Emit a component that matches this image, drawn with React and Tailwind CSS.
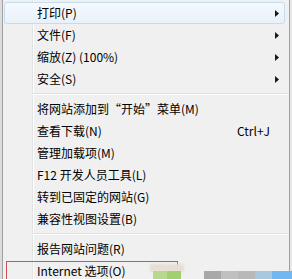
import React from "react";

const Arrow = () => (
  <svg width="4" height="7" viewBox="0 0 4 7" className="ml-auto mr-[5px]">
    <path d="M0 0 L4 3.5 L0 7 Z" fill="#1a1a1a" />
  </svg>
);

const Item = ({ label, arrow, shortcut, active }) => (
  <div
    className={
      "h-[22px] ml-px mr-[4px] flex items-center pl-[32px] rounded-[3px] border " +
      (active
        ? "border-[#c5dcf0] bg-gradient-to-b from-[#f5f9fd] to-[#e8f1fa]"
        : "border-transparent")
    }
  >
    <span className="leading-none whitespace-nowrap">{label}</span>
    {arrow && <Arrow />}
    {shortcut && <span className="ml-auto mr-[14px] leading-none">{shortcut}</span>}
  </div>
);

const Separator = () => (
  <div className="h-[8px] flex flex-col justify-center pl-[29px] pr-[1px]">
    <div className="h-px bg-[#e0e0e0]"></div>
    <div className="h-px bg-white"></div>
  </div>
);

export default function App() {
  return (
    <div className="relative w-[292px] h-[279px] overflow-hidden bg-[#f0f0f0] flex font-['Noto_Sans_CJK_SC',sans-serif] text-[12px] text-black">
      {/* left frame */}
      <div className="w-[2px] bg-[#dcdcdc]"></div>
      <div className="w-px bg-[#a0a0a0]"></div>

      {/* menu body */}
      <div className="relative flex-1 pt-[2px]">
        <div className="absolute left-[29px] top-0 bottom-0 w-px bg-[#e2e3e3]"></div>
        <div className="absolute left-[30px] top-0 bottom-0 w-px bg-white"></div>

        <div className="relative flex flex-col">
          <Item label="打印(P)" arrow active />
          <Item label="文件(F)" arrow />
          <Item label="缩放(Z) (100%)" arrow />
          <Item label="安全(S)" arrow />
          <Separator />
          <Item label="将网站添加到“开始”菜单(M)" />
          <Item label="查看下载(N)" shortcut="Ctrl+J" />
          <Item label="管理加载项(M)" />
          <Item label="F12 开发人员工具(L)" />
          <Item label="转到已固定的网站(G)" />
          <Item label="兼容性视图设置(B)" />
          <Separator />
          <Item label="报告网站问题(R)" />
          <Item label="Internet 选项(O)" />
        </div>
      </div>

      {/* right frame */}
      <div className="w-px bg-[#a0a0a0]"></div>
      <div className="w-[2px] bg-[#e8e8e8]"></div>

      {/* red annotation box */}
      <div className="absolute left-[6px] top-[261px] w-[172px] h-[30px] border border-[#d0505a]"></div>

      {/* blurred strip at bottom */}
      <div className="absolute left-[150px] top-[264px] w-[34px] h-[8px] bg-[#e6e0d4] blur-[1px]"></div>
      <div className="absolute left-[153px] top-[271px] w-[14px] h-[8px] bg-[#b8d890]"></div>
      <div className="absolute left-[167px] top-[271px] w-[14px] h-[8px] bg-[#a2d070]"></div>
      <div className="absolute left-[204px] top-[271px] w-[17px] h-[8px] bg-[#a8a8a8]"></div>
      <div className="absolute left-[221px] top-[271px] w-[17px] h-[8px] bg-[#c0c0c0]"></div>
      <div className="absolute left-[238px] top-[271px] w-[17px] h-[8px] bg-[#b8b8b8]"></div>
      <div className="absolute left-[255px] top-[271px] w-[17px] h-[8px] bg-[#a8c8e0]"></div>
      <div className="absolute left-[272px] top-[271px] w-[20px] h-[8px] bg-[#70b8f0]"></div>
    </div>
  );
}
